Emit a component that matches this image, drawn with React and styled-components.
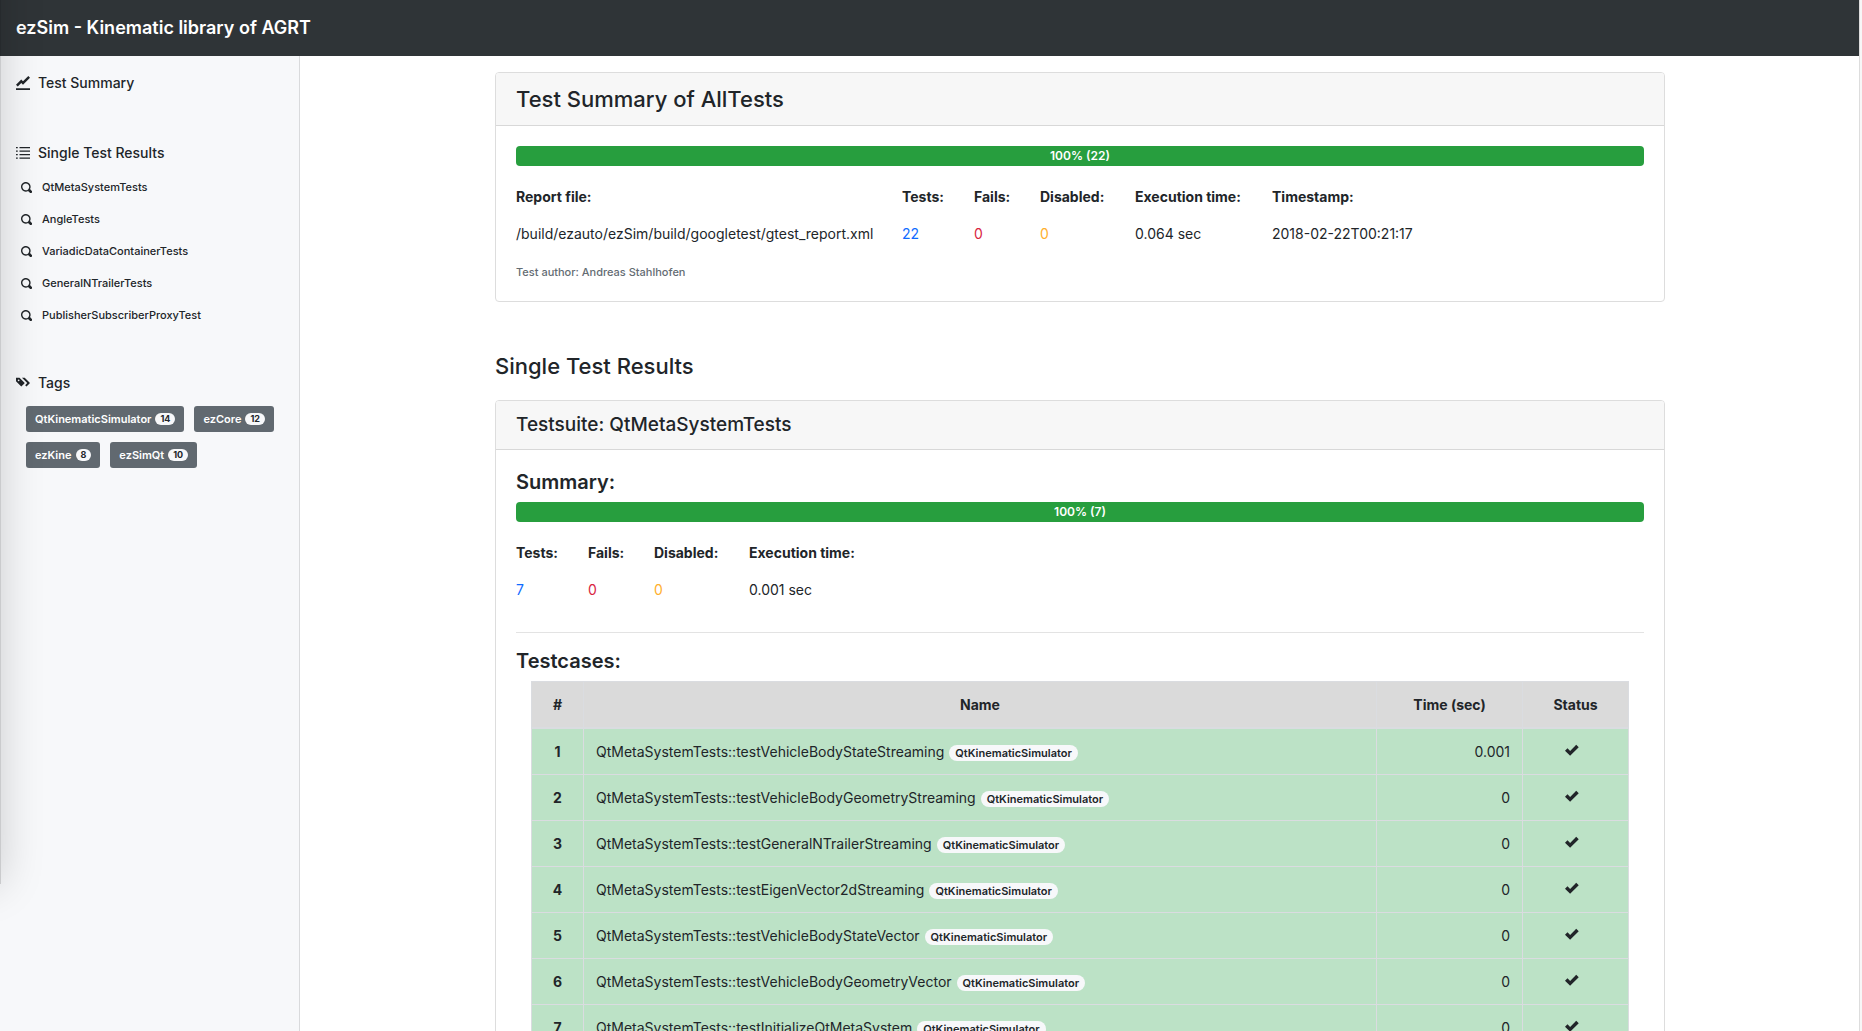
import React from "react";
import styled, { createGlobalStyle } from "styled-components";

const GlobalStyle = createGlobalStyle`
  *, *::before, *::after { box-sizing: border-box; }
  body {
    margin: 0;
    background: #ffffff;
    color: #212529;
    font-family: Inter, Roboto, "Liberation Sans", sans-serif;
    font-size: 14px;
    line-height: 21px;
  }
  h1, h2, h3, h4 { margin: 0; }
`;

const Page = styled.div`
  display: flex;
  flex-direction: column;
  height: 100vh;
  border-right: 2px solid #f7f7f7;
`;

const Navbar = styled.header`
  flex: none;
  display: flex;
  align-items: center;
  height: 56px;
  padding: 0 16px;
  background: #2f3437;
  border-right: 1px solid #dddddd;
`;

const Brand = styled.a`
  color: #ffffff;
  font-size: 18px;
  font-weight: 600;
  line-height: 30px;
  text-decoration: none;
`;

const Body = styled.div`
  flex: 1;
  min-height: 0;
  display: flex;
  box-shadow: inset -1px 0 #dddddd;
`;

const Sidebar = styled.nav`
  flex: none;
  width: 300px;
  padding: 16px;
  background: #f7f8fa;
  border-right: 1px solid #d9dadc;
`;

const WindowShade = styled.div`
  position: fixed;
  top: -60px;
  bottom: 147px;
  left: -100px;
  width: 101px;
  background: rgba(0, 0, 0, 0.18);
  box-shadow: 0 0 44px rgba(0, 0, 0, 0.18);
  pointer-events: none;
`;

const SideSection = styled.section`
  margin-bottom: ${(p) => p.$gap}px;
`;

const SideHeading = styled.a`
  display: flex;
  align-items: center;
  gap: 8px;
  line-height: 22px;
  font-weight: 500;
  color: #212529;
  text-decoration: none;
`;

const SideList = styled.ul`
  list-style: none;
  margin: 7px 0 0;
  padding: 0 0 0 5px;
`;

const SideLink = styled.a`
  display: flex;
  align-items: center;
  gap: 10px;
  height: 32px;
  color: #212529;
  font-size: 11px;
  font-weight: 500;
  text-decoration: none;
`;

const TagList = styled.div`
  display: flex;
  flex-wrap: wrap;
  gap: 10px;
  padding: 12px 0 0 10px;
`;

const TagButton = styled.button`
  display: flex;
  align-items: center;
  gap: 4px;
  height: 26px;
  padding: 0 9px;
  border: 0;
  border-radius: 3px;
  background: #616970;
  color: #ffffff;
  font: 600 11px/16px Inter, Roboto, sans-serif;
`;

const Count = styled.span`
  padding: 0 5px;
  border-radius: 6px;
  background: #f7f8fa;
  color: #212529;
  font-size: 9px;
  font-weight: 700;
  line-height: 12px;
`;

const Icon = styled.svg`
  flex: none;
  fill: #212529;
`;

const Main = styled.main`
  flex: 1;
  min-width: 0;
  padding: 16px 0;
  overflow-y: auto;
  scrollbar-width: none;
`;

const Container = styled.div`
  width: 75%;
  margin: 0 auto;
`;

const Card = styled.section`
  border: 1px solid #dddddd;
  border-radius: 4px;
  overflow: hidden;
`;

const CardHeader = styled.header`
  padding: 12px 20px;
  background: #f7f7f7;
  border-bottom: 1px solid #d8d8d8;
`;

const CardBody = styled.div`
  padding: 20px;
`;

const Title = styled.h2`
  font-size: 22px;
  font-weight: 500;
  line-height: 28px;
`;

const SectionTitle = styled(Title)`
  margin: 50px 0 20px;
`;

const SuiteTitle = styled.h3`
  font-size: 19px;
  font-weight: 500;
  line-height: 24px;
`;

const PartTitle = styled.h4`
  margin-bottom: 8px;
  font-size: 20px;
  font-weight: 600;
  line-height: 24px;
`;

const Progress = styled.div`
  height: 20px;
  border-radius: 4px;
  background: #e9ecef;
  overflow: hidden;
`;

const ProgressFill = styled.div`
  height: 100%;
  background: #279e3e;
  color: #ffffff;
  font-size: 12px;
  font-weight: 600;
  line-height: 20px;
  text-align: center;
`;

const Facts = styled.table`
  margin-top: 12px;
  border-collapse: collapse;
  table-layout: fixed;

  th, td {
    padding: 8px 0;
    text-align: left;
    white-space: nowrap;
  }
  th { font-weight: 700; }
`;

const FactCol = styled.col`
  width: ${(p) => p.$w}px;
`;

const FactValue = styled.td`
  color: ${(p) => p.$color || "inherit"};
`;

const Author = styled.p`
  margin: 12px 0 0;
  color: #646c73;
  font-size: 11px;
  font-weight: 500;
  line-height: 17px;
`;

const Divider = styled.hr`
  margin: 24px 0 16px;
  border: 0;
  border-top: 1px solid #e3e3e3;
`;

const CaseWrap = styled.div`
  padding: 0 15px;
`;

const CaseTable = styled.table`
  width: 100%;
  border-collapse: collapse;
  table-layout: fixed;

  th, td {
    padding: 12px;
    border: 1px solid #dadce0;
  }
  th { font-weight: 700; text-align: center; }
  thead th {
    background: #dadada;
    border-bottom-width: 2px;
  }
  tbody tr { background: #bce2c6; }
`;

const CaseCol = styled.col`
  width: ${(p) => (p.$w ? p.$w + "px" : "auto")};
`;

const NameCell = styled.td`
  white-space: nowrap;
`;

const TimeCell = styled.td`
  text-align: right;
`;

const StatusCell = styled.td`
  text-align: center;

  ${Icon} { margin-right: 8px; }
`;

const Badge = styled.span`
  display: inline-block;
  margin-left: 5px;
  padding: 0 6px;
  border-radius: 10px;
  background: #f7f8fa;
  font-size: 11px;
  font-weight: 600;
  line-height: 16px;
`;

const GLYPHS = {
  graph: "M7.03 0l-3.03 3-1-1-3 3.03 1 1 2-2.03 1 1 4-4-.97-1zm-7.03 7v1h8v-1h-8z",
  list: "M0 .5v.8h1v-.8h-1zm2 0v.8h6v-.8h-6zm-2 2v.8h1v-.8h-1zm2 0v.8h6v-.8h-6zm-2 2v.8h1v-.8h-1zm2 0v.8h6v-.8h-6zm-2 2v.8h1v-.8h-1zm2 0v.8h6v-.8h-6z",
  search:
    "M3.5 0c-1.93 0-3.5 1.57-3.5 3.5s1.57 3.5 3.5 3.5c.59 0 1.17-.14 1.66-.41a1 1 0 0 0 .13.13l1 1a1.02 1.02 0 1 0 1.44-1.44l-1-1a1 1 0 0 0-.16-.13c.27-.49.44-1.06.44-1.66 0-1.93-1.55-3.5-3.5-3.5zm0 1c1.39 0 2.5 1.1 2.5 2.5 0 .66-.24 1.27-.66 1.72-.01.01-.02.02-.03.03a1 1 0 0 0-.13.13c-.44.4-1.04.63-1.69.63-1.39 0-2.5-1.1-2.5-2.5s1.1-2.5 2.5-2.5z",
  tags: "M0 1v2l3 3 1.5-1.5.5-.5-2-2-1-1h-2zm3.41 0l3 3-1.19 1.22.78.78 2-2-3-3h-1.59zm-1.91 1c.28 0 .5.22.5.5s-.22.5-.5.5-.5-.22-.5-.5.22-.5.5-.5z",
  check:
    "M6.41 1l-.69.72-2.78 2.78-.81-.78-.72-.72-1.41 1.41.72.72 1.5 1.5.69.72.72-.72 3.5-3.5.72-.72-1.44-1.41z",
};

function Glyph({ name, size = 14 }) {
  return (
    <Icon width={size} height={size} viewBox="0 0 8 8" aria-hidden="true">
      <path d={GLYPHS[name]} />
    </Icon>
  );
}

const BLUE = "#0f6bff";
const RED = "#d9263f";
const AMBER = "#ffb02e";

const SUITES = [
  "QtMetaSystemTests",
  "AngleTests",
  "VariadicDataContainerTests",
  "GeneralNTrailerTests",
  "PublisherSubscriberProxyTest",
];

const TAGS = [
  ["QtKinematicSimulator", 14],
  ["ezCore", 12],
  ["ezKine", 8],
  ["ezSimQt", 10],
];

const REPORT = [
  { label: "Report file:", value: "/build/ezauto/ezSim/build/googletest/gtest_report.xml", width: 386 },
  { label: "Tests:", value: "22", color: BLUE, width: 72 },
  { label: "Fails:", value: "0", color: RED, width: 66 },
  { label: "Disabled:", value: "0", color: AMBER, width: 95 },
  { label: "Execution time:", value: "0.064 sec", width: 137 },
  { label: "Timestamp:", value: "2018-02-22T00:21:17", width: 150 },
];

const SUITE_FACTS = [
  { label: "Tests:", value: "7", color: BLUE, width: 72 },
  { label: "Fails:", value: "0", color: RED, width: 66 },
  { label: "Disabled:", value: "0", color: AMBER, width: 95 },
  { label: "Execution time:", value: "0.001 sec", width: 137 },
];

const CASES = [
  ["testVehicleBodyStateStreaming", "0.001"],
  ["testVehicleBodyGeometryStreaming", "0"],
  ["testGeneralNTrailerStreaming", "0"],
  ["testEigenVector2dStreaming", "0"],
  ["testVehicleBodyStateVector", "0"],
  ["testVehicleBodyGeometryVector", "0"],
  ["testInitializeQtMetaSystem", "0"],
];

function FactTable({ facts }) {
  return (
    <Facts>
      <colgroup>
        {facts.map((f) => (
          <FactCol key={f.label} $w={f.width} />
        ))}
      </colgroup>
      <thead>
        <tr>
          {facts.map((f) => (
            <th key={f.label} scope="col">{f.label}</th>
          ))}
        </tr>
      </thead>
      <tbody>
        <tr>
          {facts.map((f) => (
            <FactValue key={f.label} $color={f.color}>{f.value}</FactValue>
          ))}
        </tr>
      </tbody>
    </Facts>
  );
}

function Bar({ percent, count }) {
  return (
    <Progress>
      <ProgressFill style={{ width: `${percent}%` }}>{`${percent}% (${count})`}</ProgressFill>
    </Progress>
  );
}

export default function App() {
  return (
    <>
      <GlobalStyle />
      <Page>
        <Navbar>
          <Brand href="#">ezSim - Kinematic library of AGRT</Brand>
        </Navbar>
        <Body>
          <Sidebar>
            <SideSection $gap={48}>
              <SideHeading href="#summary"><Glyph name="graph" />Test Summary</SideHeading>
            </SideSection>
            <SideSection $gap={41}>
              <SideHeading href="#results"><Glyph name="list" />Single Test Results</SideHeading>
              <SideList>
                {SUITES.map((s) => (
                  <li key={s}>
                    <SideLink href={`#${s}`}><Glyph name="search" size={11} />{s}</SideLink>
                  </li>
                ))}
              </SideList>
            </SideSection>
            <SideSection $gap={0}>
              <SideHeading href="#tags"><Glyph name="tags" />Tags</SideHeading>
              <TagList>
                {TAGS.map(([name, n]) => (
                  <TagButton key={name} type="button">{name}<Count>{n}</Count></TagButton>
                ))}
              </TagList>
            </SideSection>
          </Sidebar>
          <Main>
            <Container>
              <Card id="summary">
                <CardHeader><Title>Test Summary of AllTests</Title></CardHeader>
                <CardBody>
                  <Bar percent={100} count={22} />
                  <FactTable facts={REPORT} />
                  <Author>Test author: Andreas Stahlhofen</Author>
                </CardBody>
              </Card>
              <SectionTitle id="results">Single Test Results</SectionTitle>
              <Card id="QtMetaSystemTests">
                <CardHeader><SuiteTitle>Testsuite: QtMetaSystemTests</SuiteTitle></CardHeader>
                <CardBody>
                  <PartTitle>Summary:</PartTitle>
                  <Bar percent={100} count={7} />
                  <FactTable facts={SUITE_FACTS} />
                  <Divider />
                  <PartTitle>Testcases:</PartTitle>
                  <CaseWrap>
                    <CaseTable>
                      <colgroup>
                        <CaseCol $w={52} />
                        <CaseCol />
                        <CaseCol $w={146} />
                        <CaseCol $w={106} />
                      </colgroup>
                      <thead>
                        <tr>
                          <th scope="col">#</th>
                          <th scope="col">Name</th>
                          <th scope="col">Time (sec)</th>
                          <th scope="col">Status</th>
                        </tr>
                      </thead>
                      <tbody>
                        {CASES.map(([name, time], i) => (
                          <tr key={name}>
                            <th scope="row">{i + 1}</th>
                            <NameCell>
                              QtMetaSystemTests::{name}
                              <Badge>QtKinematicSimulator</Badge>
                            </NameCell>
                            <TimeCell>{time}</TimeCell>
                            <StatusCell><Glyph name="check" /></StatusCell>
                          </tr>
                        ))}
                      </tbody>
                    </CaseTable>
                  </CaseWrap>
                </CardBody>
              </Card>
            </Container>
          </Main>
        </Body>
      </Page>
      <WindowShade />
    </>
  );
}
